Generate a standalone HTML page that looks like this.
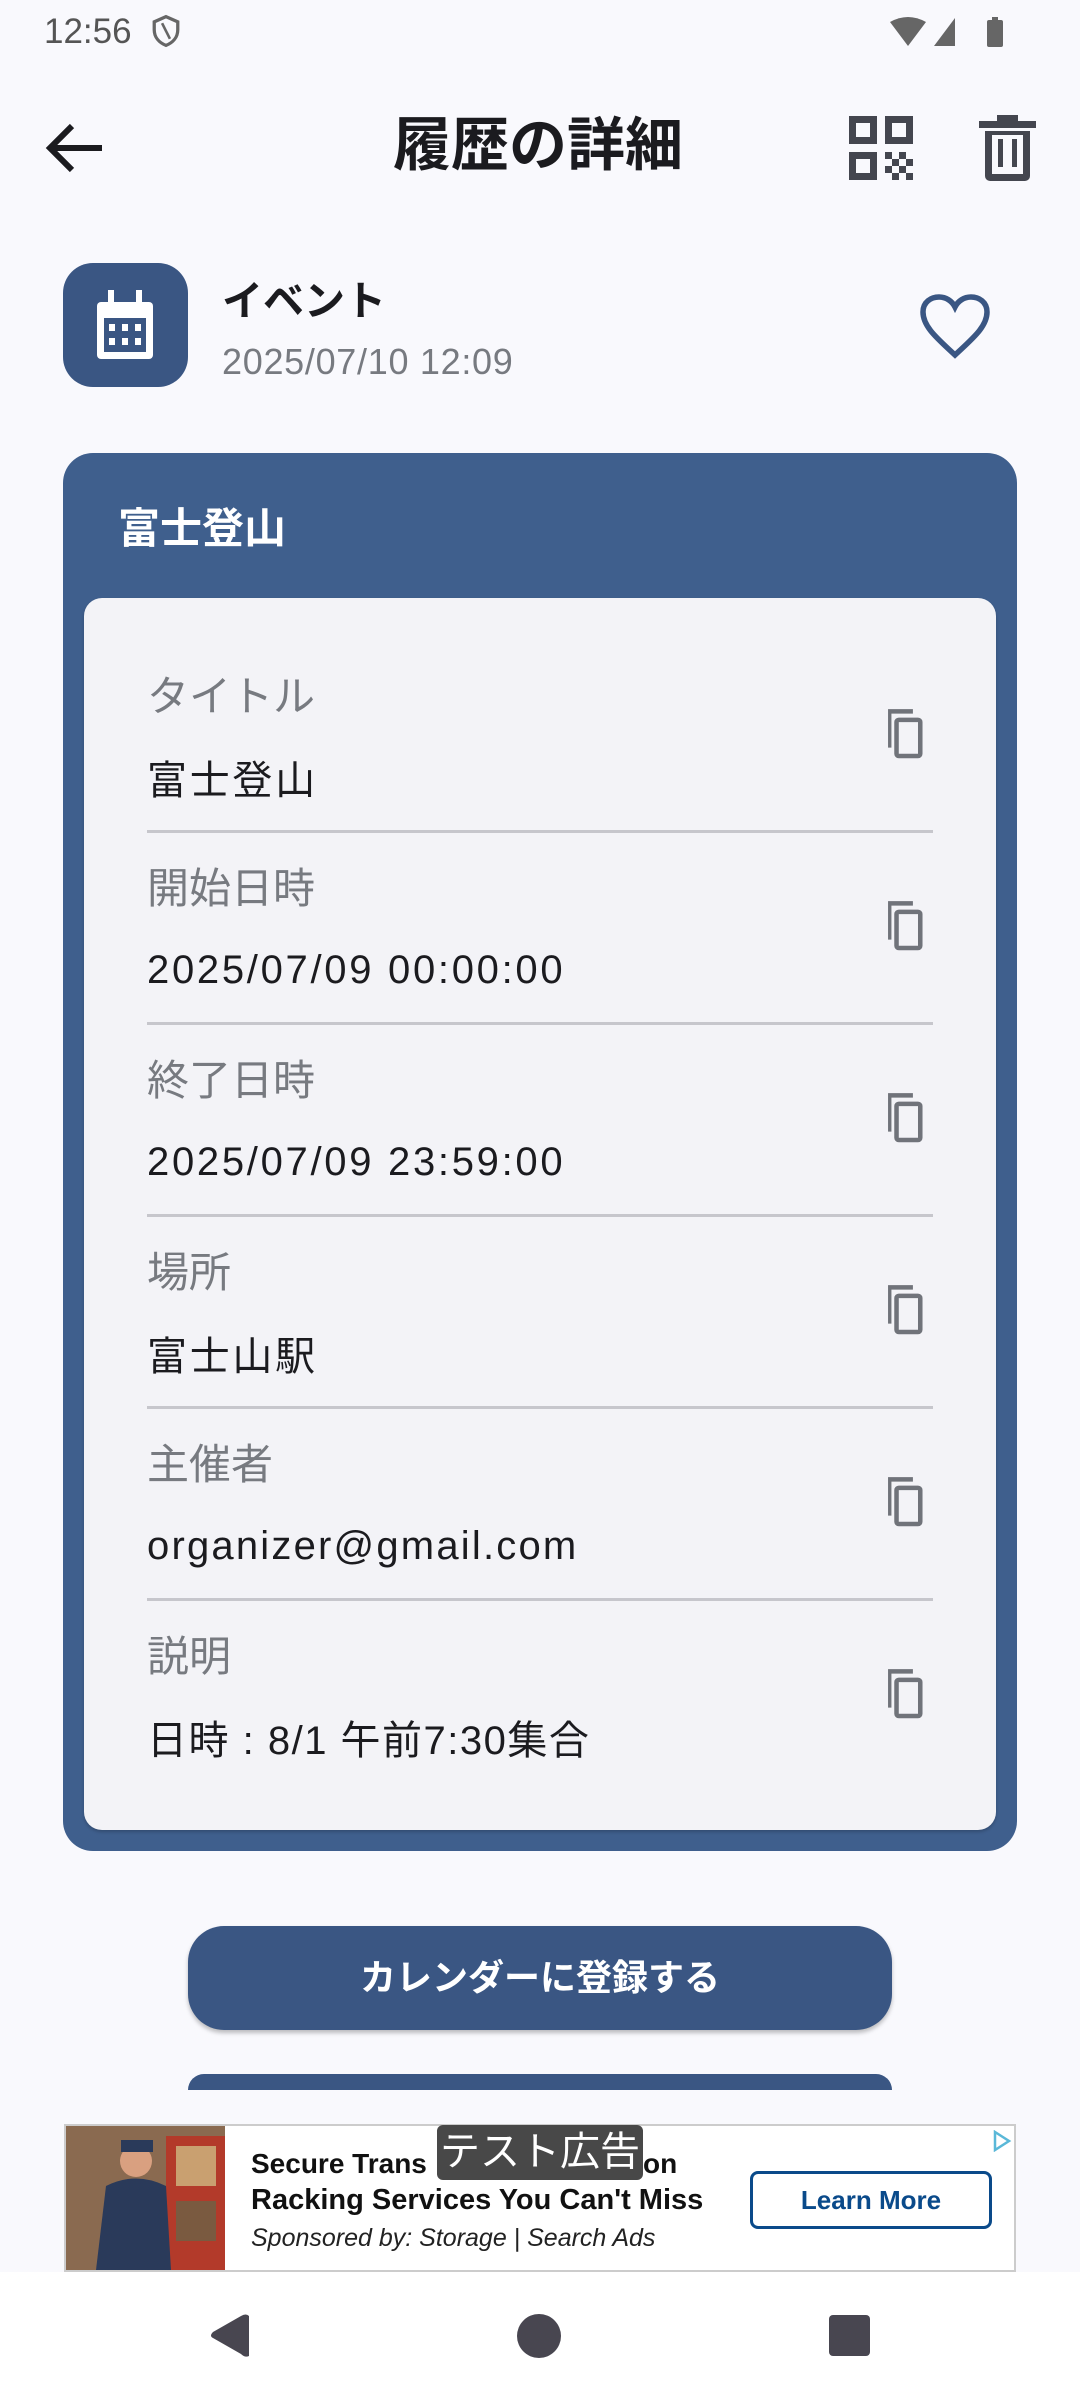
<!DOCTYPE html>
<html><head><meta charset="utf-8"><style>
*{margin:0;padding:0;box-sizing:border-box}
body{width:1080px;height:2400px;background:#f9f9fd;position:relative;overflow:hidden;font-family:"Liberation Sans","Noto Sans CJK JP",sans-serif}
.a{position:absolute;white-space:nowrap;line-height:1}
.lbl{font-size:42px;color:#777a80;left:147px}
.val{font-size:40px;color:#1b1b1f;left:147px;letter-spacing:2.7px}
.div{position:absolute;left:147px;width:786px;height:3px;background:#c6c6cc}
.cp{position:absolute;left:882px;width:46px;height:52px}
</style></head><body>
<div class="a" style="left:44px;top:14px;font-size:35px;color:#555">12:56</div>
<svg class="a" style="left:150px;top:14px" width="32" height="34" viewBox="0 0 24 26"><path d="M12 2L3 6v6c0 6 4 10 9 12 5-2 9-6 9-12V6z" fill="none" stroke="#666" stroke-width="2.5"/><path d="M9 7l6 12" stroke="#666" stroke-width="2"/></svg>
<svg class="a" style="left:890px;top:16px" width="120" height="32" viewBox="0 0 120 32"><path d="M0 6Q18 -4 36 6L18 30z" fill="#666"/><path d="M65 2V30H44z" fill="#666"/><rect x="97" y="4" width="16" height="27" rx="2" fill="#666"/><rect x="102" y="1" width="6" height="4" fill="#666"/></svg>

<svg class="a" style="left:44px;top:122px" width="62" height="52" viewBox="0 0 62 52"><path d="M58 26H8M28 4L6 26l22 22" fill="none" stroke="#1b1b1f" stroke-width="6"/></svg>
<div class="a" style="left:0;width:1076px;text-align:center;top:117px;font-size:58px;font-weight:bold;color:#1b1b1f">履歴の詳細</div>
<svg class="a" style="left:849px;top:116px" width="64" height="64" viewBox="0 0 64 64" fill="#44464f"><path d="M0 0h28v28H0zM7 7v14h14V7zM36 0h28v28H36zM43 7v14h14V7zM0 36h28v28H0zM7 43v14h14V43z"/><path d="M36 36h7v7h-7zM50 36h7v7h-7zM43 43h7v7h-7zM57 43h7v7h-7zM36 50h7v7h-7zM50 50h7v7h-7zM43 57h7v7h-7zM57 57h7v7h-7z"/></svg>
<svg class="a" style="left:979px;top:115px" width="57" height="66" viewBox="0 0 57 66"><path d="M0 6h57v7H0zM18 0h21v7H18z" fill="#44464f"/><path d="M6 16h45v45a5 5 0 0 1-5 5H11a5 5 0 0 1-5-5z" fill="#44464f"/><rect x="13" y="20" width="31" height="39" fill="#f9f9fd"/><rect x="19" y="24" width="5" height="28" fill="#44464f"/><rect x="33" y="24" width="5" height="28" fill="#44464f"/></svg>

<div class="a" style="left:63px;top:263px;width:125px;height:124px;border-radius:30px;background:#3a5683"></div>
<svg class="a" style="left:94px;top:290px" width="62" height="72" viewBox="0 0 62 72"><rect x="3" y="12" width="56" height="57" rx="4" fill="#fff"/><rect x="10" y="28" width="42" height="34" fill="#3a5683"/><rect x="14" y="0" width="6" height="14" fill="#fff"/><rect x="42" y="0" width="6" height="14" fill="#fff"/><g fill="#fff"><rect x="15" y="34" width="6" height="7"/><rect x="28" y="34" width="6" height="7"/><rect x="41" y="34" width="6" height="7"/><rect x="15" y="48" width="6" height="7"/><rect x="28" y="48" width="6" height="7"/><rect x="41" y="48" width="6" height="7"/></g></svg>
<div class="a" style="left:222px;top:281px;font-size:41px;font-weight:bold;color:#1b1b1f">イベント</div>
<div class="a" style="left:222px;top:344px;font-size:36px;color:#777a80;letter-spacing:0.7px">2025/07/10 12:09</div>
<svg class="a" style="left:918px;top:293px" width="74" height="68" viewBox="0 0 74 68"><path d="M37 62C20 46 5 34 5 19 5 9 13 4 21 4c7 0 13 4 16 10 3-6 9-10 16-10 8 0 16 5 16 15 0 15-15 27-32 43z" fill="none" stroke="#3a5683" stroke-width="5.5"/></svg>

<div class="a" style="left:63px;top:453px;width:954px;height:1398px;border-radius:30px;background:#3f5f8d"></div>
<div class="a" style="left:118px;top:508px;font-size:42px;font-weight:bold;color:#fff">富士登山</div>
<div class="a" style="left:84px;top:598px;width:912px;height:1232px;border-radius:18px;background:#f3f3f7;box-shadow:0 2px 3px rgba(0,0,0,.2)"></div>

<div class="a lbl" style="top:676px">タイトル</div>
<div class="a val" style="top:761px">富士登山</div>
<div class="div" style="top:830px"></div>
<div class="a lbl" style="top:868px">開始日時</div>
<div class="a val" style="top:950px">2025/07/09 00:00:00</div>
<div class="div" style="top:1022px"></div>
<div class="a lbl" style="top:1060px">終了日時</div>
<div class="a val" style="top:1142px">2025/07/09 23:59:00</div>
<div class="div" style="top:1214px"></div>
<div class="a lbl" style="top:1252px">場所</div>
<div class="a val" style="top:1337px">富士山駅</div>
<div class="div" style="top:1406px"></div>
<div class="a lbl" style="top:1444px">主催者</div>
<div class="a val" style="top:1526px;letter-spacing:2.2px">organizer@gmail.com</div>
<div class="div" style="top:1598px"></div>
<div class="a lbl" style="top:1636px">説明</div>
<div class="a val" style="top:1721px;letter-spacing:1.5px">日時 : 8/1 午前7:30集合</div>

<svg width="0" height="0" style="position:absolute"><defs><g id="c"><path d="M6 2h22v4H9v30H6V4z" fill="#70737a"/><rect x="13.5" y="11.5" width="21" height="32" rx="2" fill="none" stroke="#70737a" stroke-width="4"/></g></defs></svg>
<svg class="cp" style="top:708px" viewBox="5 1 32 46"><use href="#c"/></svg>
<svg class="cp" style="top:900px" viewBox="5 1 32 46"><use href="#c"/></svg>
<svg class="cp" style="top:1092px" viewBox="5 1 32 46"><use href="#c"/></svg>
<svg class="cp" style="top:1284px" viewBox="5 1 32 46"><use href="#c"/></svg>
<svg class="cp" style="top:1476px" viewBox="5 1 32 46"><use href="#c"/></svg>
<svg class="cp" style="top:1668px" viewBox="5 1 32 46"><use href="#c"/></svg>

<div class="a" style="left:188px;top:1926px;width:704px;height:104px;border-radius:36px;background:#3a5683;box-shadow:0 3px 4px rgba(0,0,0,.25);color:#fff;font-size:36px;font-weight:bold;text-align:center;line-height:104px">カレンダーに登録する</div>
<div class="a" style="left:188px;top:2074px;width:704px;height:16px;border-radius:36px 36px 0 0;background:#3a5683"></div>

<div class="a" style="left:64px;top:2124px;width:952px;height:148px;background:#fff;border:2px solid #ccc"></div>
<svg class="a" style="left:66px;top:2126px" width="159" height="144" viewBox="0 0 159 144"><rect width="159" height="144" fill="#8a6a50"/><rect x="100" y="10" width="59" height="134" fill="#b33a2a"/><rect x="110" y="20" width="40" height="40" fill="#c9a070"/><rect x="110" y="75" width="40" height="40" fill="#7a5a40"/><circle cx="70" cy="35" r="16" fill="#d9a080"/><rect x="55" y="14" width="32" height="12" fill="#2a3a5a"/><path d="M30 144L40 60q30-15 60 0l5 84z" fill="#2a3a5a"/></svg>
<div class="a" style="left:251px;top:2150px;font-size:28px;font-weight:bold;color:#111">Secure Trans</div>
<div class="a" style="left:643px;top:2150px;font-size:28px;font-weight:bold;color:#111">on</div>
<div class="a" style="left:251px;top:2186px;font-size:29px;font-weight:bold;color:#111">Racking Services You Can't Miss</div>
<div class="a" style="left:251px;top:2226px;font-size:25px;font-style:italic;color:#222">Sponsored by: Storage | Search Ads</div>
<div class="a" style="left:437px;top:2125px;width:206px;height:55px;background:#484848;border-radius:6px;color:#fff;font-size:40px;text-align:center;line-height:55px">テスト広告</div>
<div class="a" style="left:750px;top:2171px;width:242px;height:58px;border:3px solid #0a4a8a;border-radius:8px;color:#0a4a8a;font-size:26px;font-weight:bold;text-align:center;line-height:52px">Learn More</div>
<svg class="a" style="left:992px;top:2130px" width="20" height="22" viewBox="0 0 20 22"><path d="M3 2l14 9-14 9z" fill="none" stroke="#5ab8d8" stroke-width="2.5"/></svg>

<div class="a" style="left:0;top:2272px;width:1080px;height:128px;background:#fff"></div>
<svg class="a" style="left:205px;top:2312px" width="48" height="48" viewBox="0 0 48 48"><path d="M44 4v40Q40 46 36 42L8 26Q4 24 8 20L36 4q5-3 8 0z" fill="#484650"/></svg>
<div class="a" style="left:517px;top:2314px;width:44px;height:44px;border-radius:50%;background:#484650"></div>
<div class="a" style="left:829px;top:2315px;width:41px;height:41px;border-radius:4px;background:#484650"></div>
</body></html>
